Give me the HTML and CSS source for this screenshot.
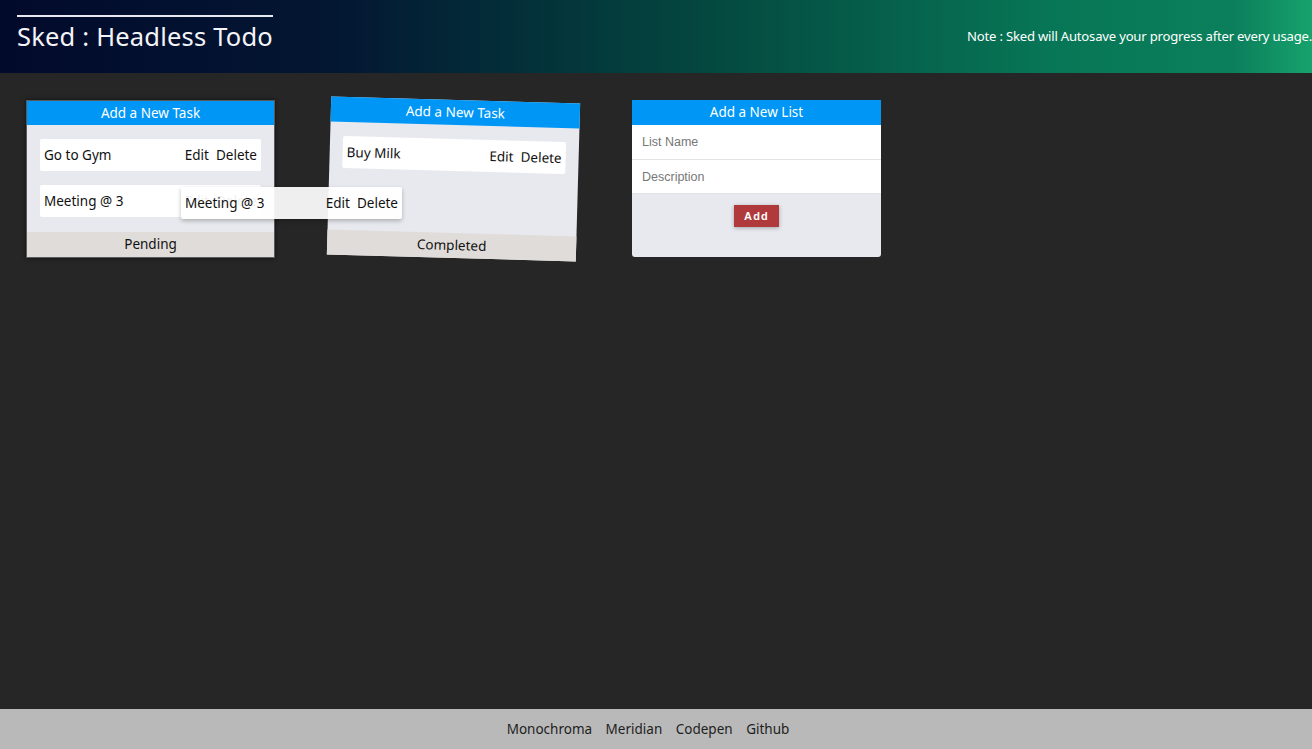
FILE: index.html
```html
<!DOCTYPE html>
<html>
<head>
<meta charset="utf-8">
<link rel="stylesheet" href="styles.css">
</head>
<body>
<header class="topbar">
  <h1 class="brand">Sked : Headless Todo</h1>
  <p class="note">Note : Sked will Autosave your progress after every usage.</p>
</header>
<main class="board">
  <section class="card card-shadowed">
    <div class="card-head">Add a New Task</div>
    <div class="card-body">
      <div class="task"><span>Go to Gym</span><span class="actions">Edit&nbsp;&nbsp;Delete</span></div>
      <div class="task"><span>Meeting @ 3</span><span class="actions">Edit&nbsp;&nbsp;Delete</span></div>
    </div>
    <div class="card-foot">Pending</div>
  </section>
  <section class="card card-tilted">
    <div class="card-head">Add a New Task</div>
    <div class="card-body">
      <div class="task"><span>Buy Milk</span><span class="actions">Edit&nbsp;&nbsp;Delete</span></div>
    </div>
    <div class="card-foot">Completed</div>
  </section>
  <section class="card card-list">
    <div class="card-head">Add a New List</div>
    <div class="list-body">
      <div class="field">List Name</div>
      <div class="field">Description</div>
      <div class="btn-row"><button class="add-btn">Add</button></div>
    </div>
  </section>
  <div class="task ghost"><span>Meeting @ 3</span><span class="actions">Edit&nbsp;&nbsp;Delete</span></div>
</main>
<footer class="footer">
  <a>Monochroma</a><a>Meridian</a><a>Codepen</a><a>Github</a>
</footer>
</body>
</html>
```
FILE: styles.css
```css
* { box-sizing: border-box; }
html, body { margin: 0; height: 100%; }
body {
  background: #262626;
  font-family: "Noto Sans", "Open Sans", sans-serif;
  display: flex;
  flex-direction: column;
  min-height: 749px;
}
.topbar {
  height: 73px;
  background: linear-gradient(90deg, #020a2c 0%, #031632 25%, #044a40 55%, #077656 80%, #0b7f5b 94%, #17a26d 100%);
  display: flex;
  align-items: flex-start;
  justify-content: space-between;
  padding: 0 0 0 17px;
  color: #fff;
}
.brand {
  margin: 15px 0 0;
  padding-top: 2px;
  border-top: 2px solid #e8e8f0;
  font-weight: 400;
  font-size: 25.5px;
  line-height: 34px;
  letter-spacing: 0.2px;
  color: #f4f4f8;
}
.note {
  margin: 27px 0 0;
  font-size: 13.1px;
  line-height: 18px;
  white-space: nowrap;
  letter-spacing: -0.2px;
}
.board {
  flex: 1;
  position: relative;
  display: flex;
  align-items: flex-start;
  gap: 54px;
  padding: 27px 26px;
}
.card {
  width: 249px;
  min-height: 158px;
  display: flex;
  flex-direction: column;
  background: #e8e9ee;
  font-size: 13.5px;
  color: #111;
}
.card-shadowed {
  border: 1px solid #5a5a5a;
  box-shadow: 0 0 4px rgba(0,0,0,0.6);
}
.card-tilted {
  transform: rotate(1.6deg);
}
.card-list { border-radius: 0 0 3px 3px; overflow: hidden; min-height: 157px; }
.card-head {
  height: 25px;
  background: #0096f5;
  color: #fff;
  text-align: center;
  line-height: 24px;
  font-size: 13.5px;
}
.card-shadowed .card-head { height: 24px; }
.card-body {
  flex: 1;
  padding: 14px 13px 3px;
  display: flex;
  flex-direction: column;
  gap: 14px;
}
.task {
  height: 32px;
  background: #fff;
  border-radius: 2px;
  display: flex;
  justify-content: space-between;
  align-items: center;
  padding: 0 4px;
  font-size: 13.5px;
  color: #111;
}
.card-foot {
  height: 25px;
  background: #e0dcd9;
  text-align: center;
  line-height: 24px;
  font-size: 13.5px;
}
.ghost {
  position: absolute;
  left: 181px;
  top: 114px;
  width: 221px;
  background: rgba(255,255,255,0.93);
  box-shadow: 0 2px 4px rgba(0,0,0,0.25);
}
.list-body {
  flex: 1;
  display: flex;
  flex-direction: column;
}
.field {
  height: 35px;
  background: #fff;
  border-bottom: 1px solid #e3e3e3;
  padding: 0 10px;
  line-height: 34px;
  font-family: "Liberation Sans", Arial, sans-serif;
  font-size: 12.5px;
  color: #777;
}
.field + .field { height: 34px; }
.btn-row {
  display: flex;
  justify-content: center;
  padding-top: 11px;
}
.add-btn {
  width: 45px;
  height: 22px;
  border: none;
  background: #b0393c;
  color: #fff;
  font-family: "Liberation Sans", Arial, sans-serif;
  font-size: 11px;
  font-weight: 700;
  letter-spacing: 1.2px;
  box-shadow: 0 1px 4px rgba(0,0,0,0.3);
  padding: 0;
}
.footer {
  height: 40px;
  background: #b9b9b9;
  display: flex;
  justify-content: center;
  align-items: center;
  gap: 13.5px;
  padding-right: 16px;
  font-size: 13.5px;
  color: #1e1e1e;
}
```
